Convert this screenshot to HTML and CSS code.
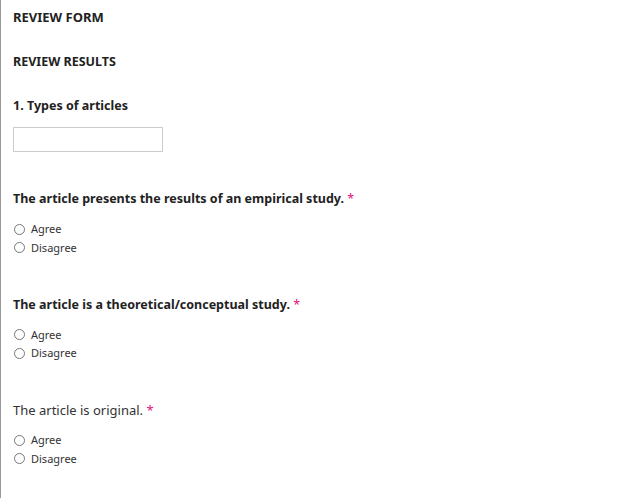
FILE: index.html
```html
<!DOCTYPE html>
<html lang="en">
<head>
    <meta charset="UTF-8">
    <meta name="viewport" content="width=device-width, initial-scale=1.0">
    <title>Review Form</title>
    <link rel="stylesheet" href="styles.css">
</head>
<body>
    <div class="panel">
        <h2 class="form-title">REVIEW FORM</h2>
        <h3 class="section-title">REVIEW RESULTS</h3>

        <div class="field">
            <label class="field-label" for="types">1. Types of articles</label>
            <input class="text-input" type="text" id="types">
        </div>

        <fieldset class="question">
            <legend class="question-label">The article presents the results of an empirical study. <span class="req">*</span></legend>
            <label class="option"><input type="radio" name="q1"> Agree</label>
            <label class="option"><input type="radio" name="q1"> Disagree</label>
        </fieldset>

        <fieldset class="question">
            <legend class="question-label">The article is a theoretical/conceptual study. <span class="req">*</span></legend>
            <label class="option"><input type="radio" name="q2"> Agree</label>
            <label class="option"><input type="radio" name="q2"> Disagree</label>
        </fieldset>

        <fieldset class="question">
            <legend class="question-label plain">The article is original. <span class="req">*</span></legend>
            <label class="option"><input type="radio" name="q3"> Agree</label>
            <label class="option"><input type="radio" name="q3"> Disagree</label>
        </fieldset>
    </div>
</body>
</html>
```

FILE: styles.css
```css
body {
    margin: 0;
    background-color: #fff;
    font-family: "Noto Sans", sans-serif;
    color: #222;
}

.panel {
    min-height: 498px;
    box-sizing: border-box;
    border-left: 1px solid #999;
    padding: 8px 12px 0 12px;
}

.form-title,
.section-title {
    margin: 0;
    font-size: 13px;
    font-weight: bold;
    line-height: 18px;
}

.section-title {
    margin-top: 27px;
    font-size: 12.5px;
}

.field {
    margin-top: 26px;
}

.field-label {
    display: block;
    font-size: 12.5px;
    font-weight: bold;
    line-height: 18px;
}

.text-input {
    display: block;
    margin-top: 12px;
    width: 150px;
    height: 25px;
    box-sizing: border-box;
    border: 1px solid #ccc;
    padding: 0 6px;
}

.question {
    border: none;
    margin: 38px 0 0 0;
    padding: 0;
}

.question + .question {
    margin-top: 38.6px;
}

.question-label {
    padding: 0;
    font-size: 12.5px;
    font-weight: bold;
    line-height: 18px;
    margin-bottom: 12px;
}

.question-label.plain {
    font-weight: normal;
    font-size: 13px;
    color: #333;
}

.req {
    color: #e0107a;
    font-weight: normal;
}

.option {
    display: flex;
    align-items: center;
    gap: 6px;
    font-size: 11px;
    line-height: 18.5px;
    color: #333;
}

.option input {
    margin: 0 0 0 1px;
    width: 11px;
    height: 11px;
}
```
